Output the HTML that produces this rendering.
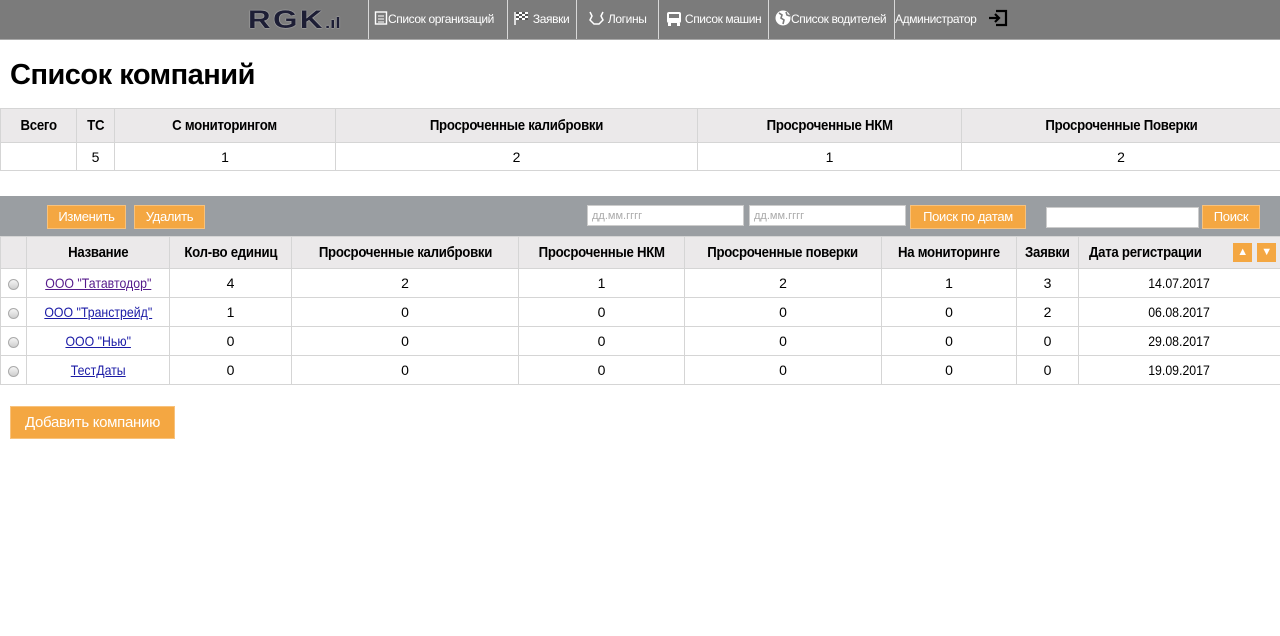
<!DOCTYPE html>
<html><head><meta charset="utf-8">
<style>
*{box-sizing:border-box;margin:0;padding:0}
body{width:1280px;height:636px;background:#fff;font-family:"Liberation Sans",sans-serif;position:relative;overflow:hidden;color:#000}
.nav{position:absolute;left:0;top:0;width:1280px;height:40px;background:#7b7b7b;border-bottom:1px solid #a8a8a8}
.nav .it{position:absolute;top:0;height:39px;color:#fff;font-size:12px;line-height:38px;white-space:nowrap;letter-spacing:-0.4px}
.sep{position:absolute;top:0;width:1px;height:39px;background:#d8d8d8}
h1{position:absolute;left:10px;top:59px;font-size:29px;font-weight:bold;letter-spacing:-0.5px}
table{position:absolute;left:0;border-collapse:collapse;table-layout:fixed;font-size:14px}
td,th{border:1px solid #d5d5d5;text-align:center;padding:0;white-space:nowrap;overflow:hidden}
th{background:#ebe9ea;font-weight:bold;font-size:15px;letter-spacing:-0.3px}
.c{display:inline-block;transform:scaleX(.88)}
a{color:#1a1aa6}
a .c{text-decoration:underline}
.bar{position:absolute;left:0;top:196px;width:1280px;height:40px;background:#9a9ea2}
.btn{position:absolute;background:#f4a742;color:#fff;font-size:13px;border:1px solid #f8c27c;text-align:center;line-height:22px;letter-spacing:-0.3px}
.inp{position:absolute;background:#fff;height:21px;font-size:11px;color:#aaa;line-height:21px;padding-left:4px;border:1px solid #ccc}
.rad{display:inline-block;width:11px;height:11px;border-radius:50%;border:1px solid #aaa;background:linear-gradient(#f4f4f4,#cfcfcf);vertical-align:middle}
</style></head><body>
<div class="nav">
 <div class="it" style="left:248px;top:0;font-size:25px;font-weight:bold;color:#1d1e35;line-height:40px;letter-spacing:2px;transform:scaleX(1.25);transform-origin:left;text-shadow:0 0 1px #fff">RGK<span style="font-size:15px;letter-spacing:0">.ıl</span></div>
 <div class="sep" style="left:368px"></div>
 <div class="it" style="left:374px"><svg width="14" height="14" viewBox="0 0 14 14" style="vertical-align:-2px"><rect x="1.5" y="1" width="11" height="12" fill="none" stroke="#fff" stroke-width="1.4"/><path d="M4 5h6M4 8h6M4 11h6" stroke="#fff"/></svg>Список организаций</div>
 <div class="sep" style="left:507px"></div>
 <div class="it" style="left:514px"><svg width="16" height="14" viewBox="0 0 16 14" style="vertical-align:-2px"><path d="M1 1v13" stroke="#fff" stroke-width="1.5"/><rect x="2" y="1" width="12" height="8" fill="#fff"/><path d="M2 1h3v2H2zM8 1h3v2H8zM5 3h3v2H5zM11 3h3v2h-3zM2 5h3v2H2zM8 5h3v2H8zM5 7h3v2H5zM11 7h3v2h-3z" fill="#555"/></svg> Заявки</div>
 <div class="sep" style="left:576px"></div>
 <div class="it" style="left:587px"><svg width="18" height="16" viewBox="0 0 18 16" style="vertical-align:-3px"><path d="M3 2l2 4-2 4 4 4h5l4-4-2-4 2-4" fill="none" stroke="#fff" stroke-width="1.5"/></svg> Логины</div>
 <div class="sep" style="left:658px"></div>
 <div class="it" style="left:666px"><svg width="16" height="15" viewBox="0 0 16 15" style="vertical-align:-3px"><rect x="1" y="1" width="14" height="11" rx="2" fill="#fff"/><rect x="3" y="3" width="10" height="4" fill="#7b7b7b"/><rect x="2" y="12" width="3" height="3" fill="#fff"/><rect x="11" y="12" width="3" height="3" fill="#fff"/></svg> Список машин</div>
 <div class="sep" style="left:768px"></div>
 <div class="it" style="left:775px"><svg width="16" height="16" viewBox="0 0 16 16" style="vertical-align:-3px"><circle cx="8" cy="8" r="7.5" fill="#fff"/><path d="M4 3l3 2-1 3 3 2-1 4M11 2l1 3 3 1" fill="none" stroke="#7b7b7b" stroke-width="1.6"/></svg>Список водителей</div>
 <div class="sep" style="left:894px"></div>
 <div class="it" style="left:895px">Администратор</div>
 <div class="it" style="left:988px"><svg width="20" height="18" viewBox="0 0 20 18" style="vertical-align:-4px"><path d="M8 2h10v14H8" fill="none" stroke="#000" stroke-width="2.2"/><path d="M1 9h10M7 5l4 4-4 4" fill="none" stroke="#000" stroke-width="2.2"/></svg></div>
</div>
<h1>Список компаний</h1>
<table style="top:108px;width:1280px">
<colgroup><col style="width:76px"><col style="width:38px"><col style="width:221px"><col style="width:362px"><col style="width:264px"><col style="width:319px"></colgroup>
<tr style="height:34px"><th><span class="c">Всего</span></th><th><span class="c">ТС</span></th><th><span class="c">С мониторингом</span></th><th><span class="c">Просроченные калибровки</span></th><th><span class="c">Просроченные НКМ</span></th><th><span class="c">Просроченные Поверки</span></th></tr>
<tr style="height:28px"><td></td><td>5</td><td>1</td><td>2</td><td>1</td><td>2</td></tr>
</table>
<div class="bar">
 <div class="btn" style="left:47px;top:9px;width:79px;height:24px">Изменить</div>
 <div class="btn" style="left:134px;top:9px;width:71px;height:24px">Удалить</div>
 <div class="inp" style="left:587px;top:9px;width:157px">дд.мм.гггг</div>
 <div class="inp" style="left:749px;top:9px;width:157px">дд.мм.гггг</div>
 <div class="btn" style="left:910px;top:9px;width:116px;height:24px">Поиск по датам</div>
 <div class="inp" style="left:1046px;top:11px;width:153px"></div>
 <div class="btn" style="left:1202px;top:9px;width:58px;height:24px">Поиск</div>
</div>
<table style="top:236px;width:1280px">
<colgroup><col style="width:26px"><col style="width:143px"><col style="width:122px"><col style="width:227px"><col style="width:166px"><col style="width:197px"><col style="width:135px"><col style="width:62px"><col style="width:202px"></colgroup>
<tr style="height:32px"><th></th><th><span class="c">Название</span></th><th><span class="c">Кол-во единиц</span></th><th><span class="c">Просроченные калибровки</span></th><th><span class="c">Просроченные НКМ</span></th><th><span class="c">Просроченные поверки</span></th><th><span class="c">На мониторинге</span></th><th><span class="c">Заявки</span></th><th style="text-align:left;padding-left:10px;position:relative"><span class="c" style="transform-origin:left">Дата регистрации</span><span style="position:absolute;left:154px;top:6px;width:19px;height:19px;background:#f4a742;color:#fff;font-size:11px;line-height:19px;text-align:center">▲</span><span style="position:absolute;left:178px;top:6px;width:19px;height:19px;background:#f4a742;color:#fff;font-size:11px;line-height:19px;text-align:center">▼</span></th></tr>
<tr style="height:29px"><td><span class="rad"></span></td><td><a href="#" style="color:#551a8b"><span class="c">ООО "Татавтодор"</span></a></td><td>4</td><td>2</td><td>1</td><td>2</td><td>1</td><td>3</td><td><span class="c">14.07.2017</span></td></tr>
<tr style="height:29px"><td><span class="rad"></span></td><td><a href="#"><span class="c">ООО "Транстрейд"</span></a></td><td>1</td><td>0</td><td>0</td><td>0</td><td>0</td><td>2</td><td><span class="c">06.08.2017</span></td></tr>
<tr style="height:29px"><td><span class="rad"></span></td><td><a href="#"><span class="c">ООО "Нью"</span></a></td><td>0</td><td>0</td><td>0</td><td>0</td><td>0</td><td>0</td><td><span class="c">29.08.2017</span></td></tr>
<tr style="height:29px"><td><span class="rad"></span></td><td><a href="#"><span class="c">ТестДаты</span></a></td><td>0</td><td>0</td><td>0</td><td>0</td><td>0</td><td>0</td><td><span class="c">19.09.2017</span></td></tr>
</table>
<div class="btn" style="left:10px;top:406px;width:165px;height:33px;line-height:31px;font-size:15px">Добавить компанию</div>
</body></html>
